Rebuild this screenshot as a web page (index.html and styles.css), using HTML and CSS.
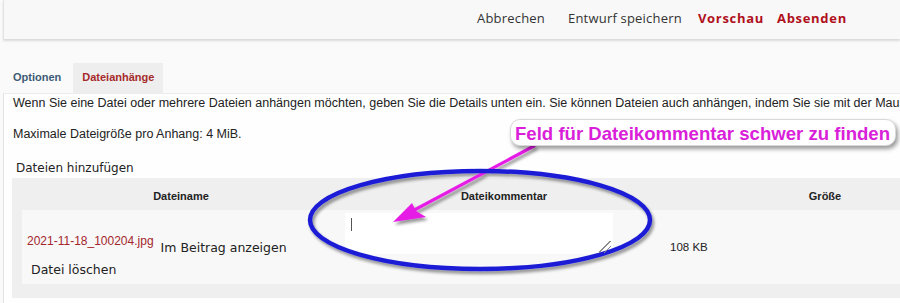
FILE: index.html
```html
<!DOCTYPE html>
<html lang="de">
<head>
    <meta charset="UTF-8">
    <title>Dateianhänge</title>
    <link rel="stylesheet" href="styles.css">
</head>
<body>

<div class="toolbar">
    <a class="tool cancel">Abbrechen</a>
    <a class="tool">Entwurf speichern</a>
    <a class="tool primary">Vorschau</a>
    <a class="tool primary">Absenden</a>
</div>

<div class="tabs">
    <a class="tab">Optionen</a>
    <a class="tab active">Dateianhänge</a>
</div>

<div class="panel">
    <p>Wenn Sie eine Datei oder mehrere Dateien anhängen möchten, geben Sie die Details unten ein. Sie können Dateien auch anhängen, indem Sie sie mit der Maus</p>
    <p>Maximale Dateigröße pro Anhang: 4 MiB.</p>

    <div class="files-title">Dateien hinzufügen</div>
    <div class="files">
        <div class="files-head">
            <div>Dateiname</div>
            <div>Dateikommentar</div>
            <div>Größe</div>
        </div>
        <div class="files-row">
            <div class="cell-name">
                <div class="name-line">
                    <a class="file-link">2021-11-18_100204.jpg</a>
                    <span class="inline-btn">Im Beitrag anzeigen</span>
                </div>
                <div class="delete-btn">Datei löschen</div>
            </div>
            <div class="cell-comment">
                <div class="comment-box">
                    <textarea></textarea>
                </div>
            </div>
            <div class="cell-size">108 KB</div>
        </div>
    </div>
</div>

<!-- annotation drawn over the screenshot -->
<svg class="marks" width="900" height="303" viewBox="0 0 900 303">
    <defs>
        <filter id="shade" x="-10%" y="-20%" width="130%" height="150%">
            <feDropShadow dx="2" dy="3" stdDeviation="1.6" flood-color="#000" flood-opacity="0.4"/>
        </filter>
    </defs>
    <g filter="url(#shade)">
        <line x1="534" y1="146" x2="405" y2="215" stroke="#e61fe6" stroke-width="3.2" stroke-linecap="round"/>
        <polygon points="393,222 412,203 416,211 426,217" fill="#e61fe6"/>
        <ellipse cx="480" cy="220" rx="170" ry="49" fill="none" stroke="#1f1fd6" stroke-width="4.5"/>
    </g>
</svg>
<div class="callout">Feld für Dateikommentar schwer zu finden</div>

</body>
</html>
```

FILE: styles.css
```css
body {
    margin: 0;
    width: 900px;
    height: 303px;
    overflow: hidden;
    position: relative;
    background: #fafafa;
    font-family: "Liberation Sans", Arial, sans-serif;
    color: #222;
}
.toolbar {
    margin-left: 3px;
    height: 39px;
    box-sizing: border-box;
    padding: 0 0 3px 473px;
    display: flex;
    align-items: center;
    background: #f8f8f8;
    border-left: 1px solid #e3e3e3;
    box-shadow: 0 2px 2px rgba(0, 0, 0, 0.13);
    font-family: "Open Sans", sans-serif;
    font-size: 13px;
    letter-spacing: 0.2px;
    white-space: nowrap;
}
.tool {
    color: #333;
    margin-right: 16px;
}
.tool.cancel {
    margin-right: 23px;
}
.tool.primary {
    color: #b0101c;
    font-weight: bold;
    letter-spacing: 0.7px;
    margin-right: 13px;
}
.tabs {
    display: flex;
    gap: 2px;
    margin: 24px 0 0 3px;
}
.tab {
    height: 30px;
    line-height: 29px;
    padding: 0 10px;
    font-size: 11px;
    font-weight: bold;
    color: #3d5a75;
}
.tab.active {
    padding: 0 9px;
    background: #eeeeee;
    color: #a52a2a;
}
.panel {
    margin-left: 3px;
    height: 220px;
    padding: 1px 9px 0;
    background: #fefefe;
    border-left: 1px solid #e2e2e2;
    border-top: 1px solid #ececec;
    font-size: 12.5px;
    line-height: 16px;
    white-space: nowrap;
}
.panel p {
    margin: 0 0 15px;
}
.files-title {
    margin: 18px 0 2px 3px;
    font-family: "DejaVu Sans", sans-serif;
    font-size: 12px;
    line-height: 16px;
}
.files {
    margin-left: -1px;
    width: 960px;
    padding: 0 10px 14px;
    background: #efefef;
}
.files-head {
    display: grid;
    grid-template-columns: 318px 328px 314px;
    padding: 11px 0 5px;
    margin-bottom: 2px;
    text-align: center;
    font-size: 11px;
    font-weight: bold;
    line-height: 14px;
}
.files-row {
    display: grid;
    grid-template-columns: 318px 328px 314px;
    height: 74px;
    background: #f8f8f8;
}
.cell-name {
    padding: 24px 0 0 5px;
}
.name-line {
    display: flex;
    align-items: flex-start;
}
.file-link {
    color: #a3262c;
    font-size: 12px;
    line-height: 14px;
}
.inline-btn {
    margin: 6px 0 0 7px;
    font-family: "DejaVu Sans", sans-serif;
    font-size: 12.5px;
    line-height: 16px;
}
.delete-btn {
    margin-top: 6px;
    padding-left: 4px;
    font-family: "DejaVu Sans", sans-serif;
    font-size: 12.5px;
    line-height: 16px;
}
.cell-comment {
    padding: 3px 0 0 5px;
}
.comment-box {
    position: relative;
    width: 268px;
    height: 41px;
}
.comment-box textarea {
    display: block;
    box-sizing: border-box;
    width: 268px;
    height: 41px;
    border: none;
    outline: none;
    resize: none;
    background: #fff;
}
/* caret */
.comment-box::after {
    content: "";
    position: absolute;
    left: 6px;
    top: 5px;
    width: 1px;
    height: 13px;
    background: #555;
}
/* resize grip */
.comment-box::before {
    content: "";
    position: absolute;
    right: 2px;
    bottom: 1px;
    width: 12px;
    height: 12px;
    background: linear-gradient(135deg, transparent 45%, #8a8a8a 45%, #8a8a8a 52%, transparent 52%, transparent 68%, #8a8a8a 68%, #8a8a8a 75%, transparent 75%);
    z-index: 1;
}
.cell-size {
    padding: 30px 0 0 2px;
    font-size: 11.5px;
    line-height: 14px;
}
.marks {
    position: absolute;
    left: 0;
    top: 0;
    pointer-events: none;
}
.callout {
    position: absolute;
    left: 510px;
    top: 119px;
    width: 386px;
    height: 27px;
    box-sizing: border-box;
    padding-left: 4px;
    background: #fff;
    border: 1px solid #d8d8d8;
    border-radius: 10px;
    box-shadow: 2px 3px 4px rgba(0, 0, 0, 0.4);
    color: #d91fd9;
    font-size: 18.6px;
    font-weight: bold;
    line-height: 27px;
    white-space: nowrap;
}
```
